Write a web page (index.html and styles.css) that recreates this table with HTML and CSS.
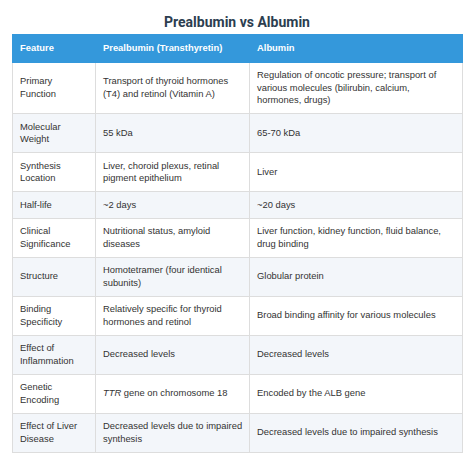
FILE: index.html
```html
<!DOCTYPE html>
<html lang="en">
<head>
<meta charset="utf-8">
<title>Prealbumin vs Albumin</title>
<link rel="stylesheet" href="styles.css">
</head>
<body>
<div class="page">
  <h1 class="title">Prealbumin vs Albumin</h1>
  <table class="cmp">
    <colgroup>
      <col class="c1"><col class="c2"><col class="c3">
    </colgroup>
    <thead>
      <tr><th>Feature</th><th>Prealbumin (Transthyretin)</th><th>Albumin</th></tr>
    </thead>
    <tbody>
      <tr><td>Primary Function</td><td>Transport of thyroid hormones (T4) and retinol (Vitamin A)</td><td>Regulation of oncotic pressure; transport of various molecules (bilirubin, calcium, hormones, drugs)</td></tr>
      <tr><td>Molecular Weight</td><td>55 kDa</td><td>65-70 kDa</td></tr>
      <tr><td>Synthesis Location</td><td>Liver, choroid plexus, retinal pigment epithelium</td><td>Liver</td></tr>
      <tr><td>Half-life</td><td>~2 days</td><td>~20 days</td></tr>
      <tr><td>Clinical Significance</td><td>Nutritional status, amyloid diseases</td><td>Liver function, kidney function, fluid balance, drug binding</td></tr>
      <tr><td>Structure</td><td>Homotetramer (four identical subunits)</td><td>Globular protein</td></tr>
      <tr><td>Binding Specificity</td><td>Relatively specific for thyroid hormones and retinol</td><td>Broad binding affinity for various molecules</td></tr>
      <tr><td>Effect of Inflammation</td><td>Decreased levels</td><td>Decreased levels</td></tr>
      <tr><td>Genetic Encoding</td><td><i>TTR</i> gene on chromosome 18</td><td>Encoded by the ALB gene</td></tr>
      <tr><td>Effect of Liver Disease</td><td>Decreased levels due to impaired synthesis</td><td>Decreased levels due to impaired synthesis</td></tr>
    </tbody>
  </table>
</div>
</body>
</html>
```
FILE: styles.css
```css
html, body {
  margin: 0;
  background: #ffffff;
}
body {
  font-family: "Liberation Sans", Arial, sans-serif;
  color: #333333;
}
.page {
  padding: 13px 12px 0 12px;
}
.title {
  font-family: Roboto, "Liberation Sans", sans-serif;
  font-weight: 700;
  font-size: 14px;
  line-height: 18px;
  color: #2c3e50;
  text-align: center;
  margin: 0 0 3px 0;
}
.cmp {
  width: 450px;
  border-collapse: collapse;
  table-layout: fixed;
  font-size: 9.4px;
  line-height: 12.7px;
}
.c1 { width: 83px; }
.c2 { width: 154px; }
.c3 { width: 213px; }
.cmp th {
  background: #3498db;
  color: #ffffff;
  font-weight: 700;
  text-align: left;
  padding: 7px 6px 7px 7px;
  border: 1px solid #3498db;
}
.cmp td {
  padding: 6.3px 6px 6.3px 7px;
  border: 1px solid #dddddd;
  vertical-align: middle;
  text-align: left;
}
.cmp tbody tr:nth-child(even) td {
  background: #f3f6fa;
}
```
